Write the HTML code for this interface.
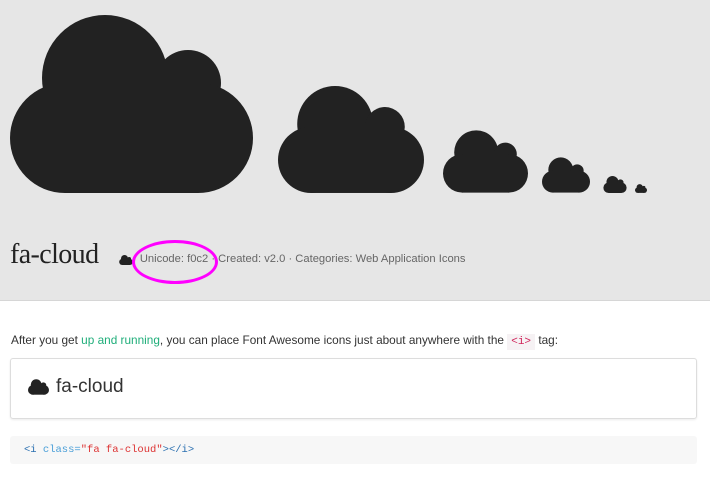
<!DOCTYPE html>
<html><head><meta charset="utf-8"><style>
body{margin:0;width:710px;height:485px;background:#fff;font-family:"Liberation Sans",sans-serif;overflow:hidden;position:relative}
.hdr{position:absolute;left:0;top:0;width:710px;height:300px;background:#e6e6e6;border-bottom:1px solid #d6d6d6}
svg.c{position:absolute}
.t{position:absolute;left:10px;top:239px;font-family:"Liberation Serif",serif;font-size:28px;color:#222;letter-spacing:-0.6px}
.meta{position:absolute;left:119px;top:253px;font-size:11.2px;color:#666}
.ring{position:absolute;left:132px;top:240px;width:80px;height:38px;border:3px solid #f0f;border-radius:50%}
.p{position:absolute;left:11px;top:333px;font-size:11.8px;color:#333}
.p a{color:#1fae7a}
.p code{font-family:"Liberation Mono",monospace;color:#d0245a;background:#f6f2f4;padding:2px 4px;font-size:11px}
.box{position:absolute;left:10px;top:358px;width:685px;height:59px;border:1px solid #ddd;border-radius:3px;box-shadow:0 1px 2px rgba(0,0,0,.08)}
.box span{position:absolute;left:45px;top:17px;font-size:19px;color:#333}
.code{position:absolute;left:10px;top:436px;width:687px;height:28px;background:#f7f7f7;border-radius:3px;font-family:"Liberation Mono",monospace;font-size:10.5px;line-height:28px;color:#2a6fb0}
.code span{padding-left:14px}
</style></head><body>
<div class="hdr"></div>
<svg width="0" height="0" style="position:absolute"><defs><g id="cl" fill="#222"><circle cx="95" cy="63" r="63"/><circle cx="178" cy="68" r="33"/><circle cx="55" cy="123" r="55"/><circle cx="188" cy="123" r="55"/><rect x="55" y="68" width="133" height="110"/></g></defs></svg>
<svg class="c" style="left:10px;top:15px" width="243" height="178" viewBox="0 0 243 178"><use href="#cl"/></svg>
<svg class="c" style="left:278px;top:86px" width="146" height="107" viewBox="0 0 243 178"><use href="#cl"/></svg>
<svg class="c" style="left:443px;top:130px" width="85" height="63" viewBox="0 0 243 178"><use href="#cl"/></svg>
<svg class="c" style="left:542px;top:157px" width="48" height="36" viewBox="0 0 243 178"><use href="#cl"/></svg>
<svg class="c" style="left:603px;top:176px" width="24" height="17" viewBox="0 0 243 178"><use href="#cl"/></svg>
<svg class="c" style="left:635px;top:184px" width="12" height="9" viewBox="0 0 243 178"><use href="#cl"/></svg>
<div class="t">fa-cloud</div>
<svg class="c" style="left:119px;top:255px" width="14" height="10" viewBox="0 0 243 178"><use href="#cl" style="fill:#888"/></svg>
<div class="meta"><span style="margin-left:14px">· Unicode: f0c2 · Created: v2.0 · Categories: Web Application Icons</span></div>
<div class="ring"></div>
<div class="p">After you get <a>up and running</a>, you can place Font Awesome icons just about anywhere with the <code>&lt;i&gt;</code> tag:</div>
<div class="box"><svg class="c" style="left:17px;top:20px" width="21" height="16" viewBox="0 0 243 178"><use href="#cl"/></svg><span>fa-cloud</span></div>
<div class="code"><span>&lt;i <span style="padding:0;color:#4a9fd8">class=</span><span style="padding:0;color:#d33">"fa fa-cloud"</span>&gt;&lt;/i&gt;</span></div>
</body></html>
